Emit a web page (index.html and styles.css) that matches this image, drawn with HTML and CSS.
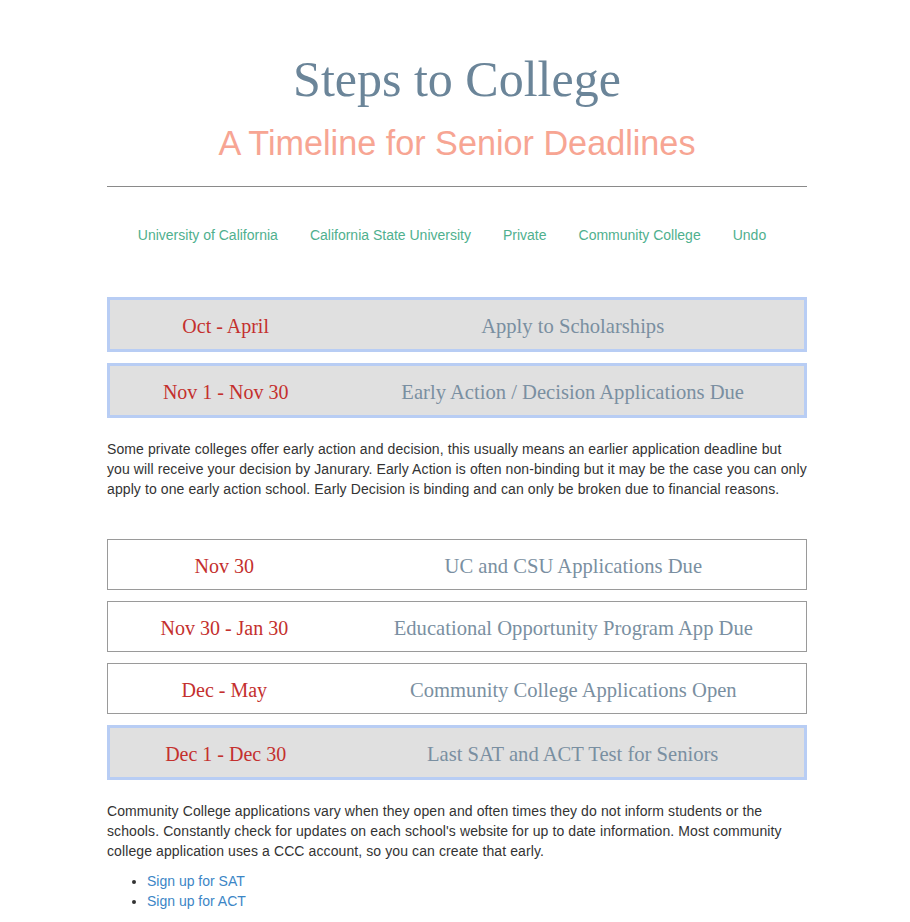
FILE: index.html
```html
<!DOCTYPE html>
<html lang="en">
<head>
<meta charset="utf-8">
<title>Steps to College</title>
<link rel="stylesheet" href="styles.css">
</head>
<body>
<div class="page">
  <header class="masthead">
    <h1 class="title">Steps to College</h1>
    <h2 class="subtitle">A Timeline for Senior Deadlines</h2>
  </header>
  <hr class="rule">
  <nav class="filters">
    <a href="#" class="filter">University of California</a>
    <a href="#" class="filter">California State University</a>
    <a href="#" class="filter">Private</a>
    <a href="#" class="filter">Community College</a>
    <a href="#" class="filter">Undo</a>
  </nav>

  <section class="timeline">
    <div class="event event-hl"><span class="date">Oct - April</span><span class="what">Apply to Scholarships</span></div>
    <div class="event event-hl"><span class="date">Nov 1 - Nov 30</span><span class="what">Early Action / Decision Applications Due</span></div>
    <p class="note">Some private colleges offer early action and decision, this usually means an earlier application deadline but you will receive your decision by Janurary. Early Action is often non-binding but it may be the case you can only apply to one early action school. Early Decision is binding and can only be broken due to financial reasons.</p>

    <div class="event event-plain event-first"><span class="date">Nov 30</span><span class="what">UC and CSU Applications Due</span></div>
    <div class="event event-plain"><span class="date">Nov 30 - Jan 30</span><span class="what">Educational Opportunity Program App Due</span></div>
    <div class="event event-plain"><span class="date">Dec - May</span><span class="what">Community College Applications Open</span></div>
    <div class="event event-hl"><span class="date">Dec 1 - Dec 30</span><span class="what">Last SAT and ACT Test for Seniors</span></div>
    <p class="note">Community College applications vary when they open and often times they do not inform students or the schools. Constantly check for updates on each school's website for up to date information. Most community college application uses a CCC account, so you can create that early.</p>
    <ul class="links">
      <li><a href="#">Sign up for SAT</a></li>
      <li><a href="#">Sign up for ACT</a></li>
    </ul>
  </section>
</div>
</body>
</html>
```
FILE: styles.css
```css
html, body {
  margin: 0;
  padding: 0;
  background: #ffffff;
}

body {
  font-family: "Liberation Sans", Arial, sans-serif;
  font-size: 14px;
  line-height: 20px;
  color: #333333;
}

.page {
  width: 704px;
  box-sizing: border-box;
  padding: 49px 0 40px 4px;
  margin: 0 auto;
}

.masthead {
  text-align: center;
}

.title {
  margin: 0;
  font-family: "Liberation Serif", "Times New Roman", serif;
  font-weight: normal;
  font-size: 50px;
  line-height: 60px;
  color: #6b8599;
}

.subtitle {
  margin: 14px 0 0;
  font-family: "Liberation Sans", Arial, sans-serif;
  font-weight: normal;
  font-size: 34.2px;
  line-height: 40px;
  color: #f7a593;
}

.rule {
  margin: 23px 0 0;
  border: 0;
  height: 1px;
  background: #8a8a8a;
}

.filters {
  display: flex;
  justify-content: center;
  gap: 32px;
  margin-top: 38px;
  padding-right: 10px;
}

.filter {
  color: #4fb08e;
  text-decoration: none;
  font-size: 14px;
  line-height: 20px;
}

.timeline {
  margin-top: 52px;
}

.event {
  display: grid;
  grid-template-columns: 1fr 2fr;
  align-items: center;
  padding: 14px 0 10px;
  font-family: "Liberation Serif", "Times New Roman", serif;
  font-size: 20px;
  line-height: 25px;
  text-align: center;
  margin-bottom: 11px;
}

.event-hl {
  background: #e0e0e0;
  border: 3px solid #b8cdf4;
}

.event-plain {
  background: #ffffff;
  border: 1px solid #9a9a9a;
}

.event-first {
  margin-top: 40px;
}

.date {
  color: #c4302e;
}

.what {
  color: #7a8fa1;
  font-size: 20.6px;
}

.note {
  margin: 21px 0 0;
  font-size: 14px;
  line-height: 20px;
  letter-spacing: 0.1px;
  color: #333333;
}

.links {
  margin: 10px 0 0;
  padding-left: 40px;
}

.links a {
  color: #3c86c6;
  text-decoration: none;
}
```
